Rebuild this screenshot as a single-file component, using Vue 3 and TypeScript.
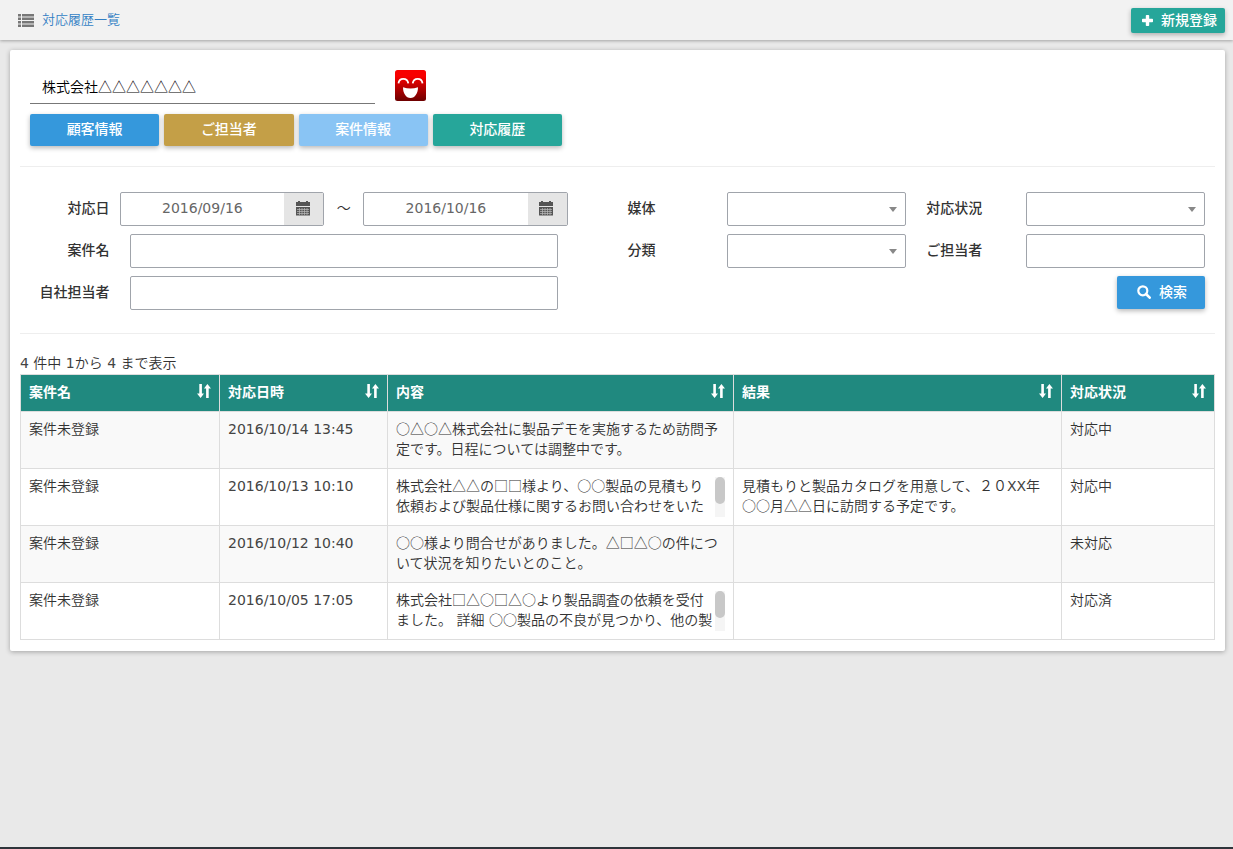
<script setup lang="ts">
import { ref } from 'vue'

interface Tab { label: string; tone: string }
interface Row { project: string; date: string; content: string; result: string; status: string; scrolls?: boolean }

const customer = ref('株式会社△△△△△△△')
const dateFrom = ref('2016/09/16')
const dateTo = ref('2016/10/16')
const project = ref('')
const staff = ref('')
const contact = ref('')
const media = ref('')
const status = ref('')
const category = ref('')

const tabs: Tab[] = [
  { label: '顧客情報', tone: 'blue' },
  { label: 'ご担当者', tone: 'gold' },
  { label: '案件情報', tone: 'sky' },
  { label: '対応履歴', tone: 'teal' },
]

const columns: string[] = ['案件名', '対応日時', '内容', '結果', '対応状況']

const rows: Row[] = [
  {
    project: '案件未登録',
    date: '2016/10/14 13:45',
    content: '○△○△株式会社に製品デモを実施するため訪問予定です。日程については調整中です。',
    result: '',
    status: '対応中',
  },
  {
    project: '案件未登録',
    date: '2016/10/13 10:10',
    content: '株式会社△△の□□様より、○○製品の見積もり依頼および製品仕様に関するお問い合わせをいた',
    result: '見積もりと製品カタログを用意して、２０XX年○○月△△日に訪問する予定です。',
    status: '対応中',
    scrolls: true,
  },
  {
    project: '案件未登録',
    date: '2016/10/12 10:40',
    content: '○○様より問合せがありました。△□△○の件について状況を知りたいとのこと。',
    result: '',
    status: '未対応',
  },
  {
    project: '案件未登録',
    date: '2016/10/05 17:05',
    content: '株式会社□△○□△○より製品調査の依頼を受付ました。 詳細 ○○製品の不良が見つかり、他の製',
    result: '',
    status: '対応済',
    scrolls: true,
  },
]

const summary = '4 件中 1から 4 まで表示'

// Odd entries are runs of Latin letters, digits or spaces, set in the Latin face.
const segments = (text: string): string[] => text.split(/([A-Za-z0-9 ]+)/)
</script>

<template>
  <div class="page">
    <header class="topbar">
      <a class="crumb" href="#">
        <svg width="16" height="13" viewBox="0 0 16 13" aria-hidden="true">
          <path d="M0 0h3v2.500H0zM4 0h12v2.500H4zM0 3.500h3V6H0zM4 3.500h12V6H4zM0 7h3v2.500H0zM4 7h12v2.500H4zM0 10.500h3V13H0zM4 10.500h12V13H4z" fill="#777" />
        </svg>
        <span>対応履歴一覧</span>
      </a>
      <button class="btn icon-btn teal new-btn" type="button">
        <svg width="11" height="11" viewBox="0 0 11 11" aria-hidden="true">
          <path d="M4.600 0h1.800q.8 0 .8.8v3h3q.8 0 .8.8v1.800q0 .8-.8.8h-3v3q0 .8-.8.8H4.600q-.8 0-.8-.8v-3h-3q-.8 0-.8-.8V4.600q0-.8.8-.8h3v-3q0-.8.8-.8z" fill="#fff" />
        </svg>
        <span>新規登録</span>
      </button>
    </header>

    <main class="card">
      <div class="customer">
        <input v-model="customer" class="customer-name" type="text" aria-label="顧客名" />
        <svg width="31" height="31" viewBox="0 0 31 31" role="img" aria-label="笑顔">
          <defs>
            <linearGradient id="face-red" x1="0" y1="0" x2="0" y2="1">
              <stop offset="0.2" stop-color="#f80000" />
              <stop offset="1" stop-color="#6d0000" />
            </linearGradient>
          </defs>
          <rect width="31" height="31" rx="2.500" fill="url(#face-red)" />
          <path d="M3.500 13.300C4.200 7.300 12.300 7.300 13.300 13.300M17.700 13.300C18.700 7.300 26.800 7.300 27.500 13.300" fill="none" stroke="#fff" stroke-width="1.800" />
          <path d="M8 17.200Q15.500 19.600 23 17.200C23 23 20 28 15.500 28S8 23 8 17.200z" fill="#fff" />
        </svg>
      </div>

      <nav class="tabs" aria-label="顧客メニュー">
        <button v-for="tab in tabs" :key="tab.label" type="button" class="btn" :class="tab.tone">{{ tab.label }}</button>
      </nav>

      <form class="search" @submit.prevent>
        <div class="half left">
          <label for="date-from">対応日</label>
          <div class="dates">
            <div class="date">
              <input id="date-from" v-model="dateFrom" type="text" />
              <button type="button" aria-label="開始日を選択">
                <svg width="14" height="15" viewBox="0 0 14 15" aria-hidden="true">
                  <path d="M2 0h2v1h6V0h2v1h2v4H0V1h2z" fill="#555" />
                  <path d="M0 6h14v8.500H0z" fill="#555" />
                  <path d="M1 8.500h12M1 10.500h12M1 12.500h12M3.500 7v7M6 7v7M8.500 7v7M11 7v7" stroke="#bbb" stroke-width=".7" />
                </svg>
              </button>
            </div>
            <span class="tilde">～</span>
            <div class="date">
              <input v-model="dateTo" type="text" aria-label="対応日 終了" />
              <button type="button" aria-label="終了日を選択">
                <svg width="14" height="15" viewBox="0 0 14 15" aria-hidden="true">
                  <path d="M2 0h2v1h6V0h2v1h2v4H0V1h2z" fill="#555" />
                  <path d="M0 6h14v8.500H0z" fill="#555" />
                  <path d="M1 8.500h12M1 10.500h12M1 12.500h12M3.500 7v7M6 7v7M8.500 7v7M11 7v7" stroke="#bbb" stroke-width=".7" />
                </svg>
              </button>
            </div>
          </div>
          <label for="project">案件名</label>
          <div class="cell"><input id="project" v-model="project" class="field" type="text" /></div>
          <label for="staff">自社担当者</label>
          <div class="cell"><input id="staff" v-model="staff" class="field" type="text" /></div>
        </div>

        <div class="half right">
          <label for="media">媒体</label>
          <div class="cell select">
            <select id="media" v-model="media" class="field"><option value=""></option></select>
          </div>
          <label for="status">対応状況</label>
          <div class="cell select">
            <select id="status" v-model="status" class="field"><option value=""></option></select>
          </div>
          <label for="category">分類</label>
          <div class="cell select">
            <select id="category" v-model="category" class="field"><option value=""></option></select>
          </div>
          <label for="contact">ご担当者</label>
          <div class="cell"><input id="contact" v-model="contact" class="field" type="text" /></div>
          <div class="actions">
            <button class="btn icon-btn blue search-btn" type="submit">
              <svg width="14" height="14" viewBox="0 0 14 14" aria-hidden="true">
                <circle cx="5.800" cy="5.800" r="4.500" fill="none" stroke="#fff" stroke-width="2.200" />
                <path d="M9 9l3.700 3.700" stroke="#fff" stroke-width="2.600" stroke-linecap="round" />
              </svg>
              <span>検索</span>
            </button>
          </div>
        </div>
      </form>

      <p class="info"><span v-for="(part, i) in segments(summary)" :key="i" :class="{ latin: i % 2 === 1 }">{{ part }}</span></p>

      <table>
        <colgroup>
          <col class="c-project" /><col class="c-date" /><col class="c-content" /><col class="c-result" /><col class="c-status" />
        </colgroup>
        <thead>
          <tr>
            <th v-for="name in columns" :key="name" scope="col">
              <div class="head">
                <span>{{ name }}</span>
                <button type="button" :aria-label="name + 'で並べ替え'">
                  <svg width="14" height="14" viewBox="0 0 14 14" aria-hidden="true">
                    <path d="M2.300 0h2.600v9.500H7L3.600 14 0 9.500h2.300zM9.100 14h2.600V4.500H14L10.400 0 7 4.500h2.100z" fill="#fff" />
                  </svg>
                </button>
              </div>
            </th>
          </tr>
        </thead>
        <tbody>
          <tr v-for="row in rows" :key="row.date">
            <td>{{ row.project }}</td>
            <td class="num">{{ row.date }}</td>
            <td>
              <div class="note" :class="{ scrolls: row.scrolls }">
                <span v-for="(part, i) in segments(row.content)" :key="i" :class="{ latin: i % 2 === 1 }">{{ part }}</span>
                <i v-if="row.scrolls" class="track"></i>
              </div>
            </td>
            <td>
              <div class="note">
                <span v-for="(part, i) in segments(row.result)" :key="i" :class="{ latin: i % 2 === 1 }">{{ part }}</span>
              </div>
            </td>
            <td>{{ row.status }}</td>
          </tr>
        </tbody>
      </table>
    </main>
    <footer class="footer"></footer>
  </div>
</template>

<style>
body {
  background: #e9e9e9;
}
</style>

<style scoped>
.page {
  display: flex;
  flex-direction: column;
  min-height: 100vh;
  color: #333;
  font-family: "Noto Sans CJK JP", sans-serif;
  font-size: 14px;
  font-weight: 350;
  line-height: 20px;
}
.page *,
.page {
  box-sizing: border-box;
}
button,
input,
select {
  font: inherit;
  color: inherit;
  margin: 0;
}
.topbar {
  display: flex;
  align-items: center;
  justify-content: space-between;
  height: 40px;
  padding: 0 8px 0 18px;
  background: #f2f2f2;
  box-shadow: 0 1px 3px rgba(0, 0, 0, 0.3);
}
.crumb {
  display: flex;
  align-items: center;
  gap: 8px;
  color: #337fc4;
  font-size: 13px;
  text-decoration: none;
}
.crumb span,
.icon-btn span {
  padding-bottom: 3px;
}
.btn {
  display: inline-flex;
  align-items: center;
  justify-content: center;
  gap: 8px;
  height: 32px;
  padding: 0 0 4px;
  border: 0;
  border-radius: 2px;
  color: #fff;
  font-weight: 500;
  box-shadow: 0 2px 5px rgba(0, 0, 0, 0.28);
  cursor: pointer;
}
.blue { background: #3598dc; }
.gold { background: #c49f47; }
.sky { background: #89c4f4; }
.teal { background: #26a69a; }
.new-btn {
  height: 25px;
  padding: 0 8px 0 11px;
}
.card {
  margin: 10px 8px 0 10px;
  padding: 20px 10px 11px;
  border-radius: 2px;
  background: #fff;
  box-shadow: 0 1px 5px rgba(0, 0, 0, 0.3);
}
.customer {
  display: flex;
  gap: 20px;
  padding-left: 10px;
}
.customer-name {
  width: 345px;
  height: 34px;
  padding: 0 12px 2px;
  border: 0;
  border-bottom: 1px solid #777;
  background: none;
  color: #000;
  outline: 0;
}
.tabs {
  display: grid;
  grid-template-columns: repeat(4, 1fr);
  gap: 5px;
  max-width: 532px;
  margin: 10px 0 20px 10px;
}
.search {
  display: grid;
  grid-template-columns: minmax(0, 1fr) minmax(0, 1fr);
  padding: 25px 0 23px;
  border-top: 1px solid #eee;
  border-bottom: 1px solid #eee;
}
.half {
  display: grid;
  align-content: start;
  row-gap: 8px;
}
.left {
  grid-template-columns: minmax(0, 2fr) minmax(0, 9fr) minmax(0, 1fr);
}
.left label {
  grid-column: 1;
  padding-left: 0;
  text-align: right;
}
.right {
  grid-template-columns: minmax(0, 1fr) minmax(0, 2fr) minmax(0, 1fr) minmax(0, 2fr);
}
label {
  padding: 5px 10px 9px;
  font-weight: 500;
  white-space: nowrap;
}
.cell {
  min-width: 0;
  padding: 0 10px;
}
.field {
  display: block;
  width: 100%;
  height: 34px;
  padding: 0 12px;
  border: 1px solid #a0a4ab;
  border-radius: 2px;
  background: #fff;
  appearance: none;
}
.select {
  position: relative;
}
.select::after {
  content: "";
  position: absolute;
  top: 15px;
  right: 19px;
  border: 4px solid transparent;
  border-top: 5px solid #888;
  border-bottom: 0;
  pointer-events: none;
}
.dates {
  display: flex;
}
.date {
  display: flex;
  flex: 1;
  min-width: 0;
  height: 34px;
  border: 1px solid #a0a4ab;
  border-radius: 2px;
}
.date input {
  flex: 1;
  min-width: 0;
  padding: 0 0 2px;
  border: 0;
  background: none;
  color: #666;
  font-family: "DejaVu Sans", sans-serif;
  font-weight: 400;
  text-align: center;
}
.date button {
  display: flex;
  align-items: center;
  justify-content: center;
  width: 39px;
  padding: 0 2px 2px 0;
  border: 0;
  background: #e5e5e5;
}
.tilde {
  width: 39px;
  padding: 5px 0;
  text-align: center;
}
.actions {
  grid-column: 1 / -1;
  display: flex;
  justify-content: flex-end;
  padding-right: 10px;
}
.search-btn {
  width: 88px;
  height: 33px;
  padding: 0 0 2px 2px;
}
.search-btn span {
  padding-bottom: 1px;
}
.info {
  margin: 18px 0 2px;
}
table {
  width: 100%;
  table-layout: fixed;
  border-collapse: collapse;
}
.c-project { width: 199px; }
.c-date { width: 168px; }
.c-content { width: 346px; }
.c-result { width: 328px; }
.c-status { width: 153px; }
th,
td {
  padding: 6px 8px 10px;
  border: 1px solid #ddd;
  text-align: left;
  vertical-align: top;
}
td {
  height: 57px;
}
th {
  background: #20897f;
  color: #fff;
  font-weight: 700;
}
.head {
  display: flex;
  justify-content: space-between;
}
.head button {
  display: flex;
  padding: 3px 0 0;
  border: 0;
  background: none;
}
tbody tr:nth-child(odd) {
  background: #f9f9f9;
}
td.num {
  padding-top: 7px;
  color: #444;
  font-family: "DejaVu Sans", sans-serif;
  font-weight: 400;
}
.latin {
  color: #444;
  font-family: "DejaVu Sans", sans-serif;
  font-weight: 400;
  line-height: 1;
}
.note {
  position: relative;
  height: 40px;
}
.scrolls {
  padding-right: 10px;
}
.track {
  position: absolute;
  top: 2px;
  right: 0;
  width: 10px;
  height: 40px;
  background: #f5f5f5;
}
.track::before {
  content: "";
  display: block;
  height: 27px;
  border-radius: 5px;
  background: #c8c8c8;
}
.footer {
  height: 2px;
  margin-top: auto;
  background: #2f353b;
}
</style>
